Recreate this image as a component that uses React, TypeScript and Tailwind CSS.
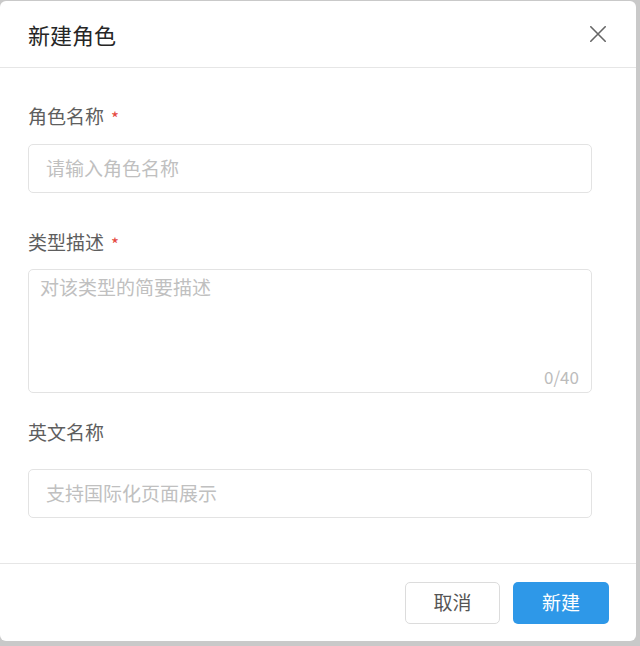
import React from "react";

const font = { fontFamily: '"Noto Sans CJK SC", "Noto Sans", sans-serif' };

function Label({ text, required }: { text: string; required?: boolean }) {
  return (
    <div className="flex h-[26px] items-center text-[19px] leading-[26px] text-[#5e5e5e]">
      <span>{text}</span>
      {required && <span className="ml-[7px] mt-[2px] text-[17px] leading-none text-[#e5483f]">*</span>}
    </div>
  );
}

export default function App() {
  return (
    <div className="h-[646px] w-[640px] bg-[#c9c9c9] pt-px" style={font}>
      <div className="flex h-[640px] w-[636px] flex-col rounded-[6px] bg-white">
        <div className="flex h-[67px] shrink-0 items-center justify-between border-b border-[#e6e6e6] pl-[28px] pr-[30px]">
          <span className="text-[22px] text-[#262626]">新建角色</span>
          <svg width="16" height="16" viewBox="0 0 16 16" className="text-[#666]">
            <path d="M0.8 0.8 L15.2 15.2 M15.2 0.8 L0.8 15.2" stroke="currentColor" strokeWidth="1.6" strokeLinecap="round" />
          </svg>
        </div>
        <div className="flex flex-1 flex-col pl-[28px] pr-[44px] pt-[35px]">
          <Label text="角色名称" required />
          <div className="mt-[15px] flex h-[49px] items-center rounded-[5px] border border-[#e3e3e3] px-[17px] text-[19px] text-[#c0c0c0]">
            请输入角色名称
          </div>
          <div className="mt-[36px]">
            <Label text="类型描述" required />
          </div>
          <div className="relative mt-[14px] h-[124px] rounded-[5px] border border-[#e3e3e3] px-[11px] pt-[1px] text-[19px] leading-[32px] text-[#c0c0c0]">
            对该类型的简要描述
            <span className="absolute bottom-[3px] right-[12px] text-[17px] leading-[24px] text-[#bcbcbc]">0/40</span>
          </div>
          <div className="mt-[26px]">
            <Label text="英文名称" />
          </div>
          <div className="mt-[24px] flex h-[49px] items-center rounded-[5px] border border-[#e3e3e3] px-[17px] text-[19px] text-[#c0c0c0]">
            支持国际化页面展示
          </div>
        </div>
        <div className="flex h-[78px] shrink-0 items-center justify-end gap-[13px] border-t border-[#e6e6e6] pr-[27px]">
          <button className="h-[42px] w-[95px] rounded-[5px] border border-[#dcdcdc] bg-white text-[19px] text-[#555]">
            取消
          </button>
          <button className="h-[42px] w-[96px] rounded-[5px] bg-[#2e98e8] text-[19px] text-white">
            新建
          </button>
        </div>
      </div>
    </div>
  );
}
